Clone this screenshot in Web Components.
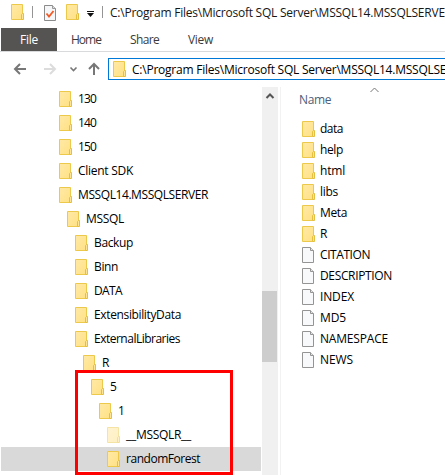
<!DOCTYPE html>
<html lang="en"><head><meta charset="utf-8"><title>Explorer</title>
<style>
html,body{margin:0;width:445px;height:475px;overflow:hidden;background:#fff;color:#000;font:12px/16px "Open Sans","Noto Sans",sans-serif}
</style></head><body>
<explorer-window></explorer-window>
<script>
function define(name, html, init){
  const t=document.createElement('template'); t.innerHTML=html;
  customElements.define(name, class extends HTMLElement{
    connectedCallback(){
      if(this.shadowRoot) return;
      this.attachShadow({mode:'open'}).append(t.content.cloneNode(true));
      if(init) init(this,this.shadowRoot);
    }
  });
}
/* Text tracked to an exact advance width */
define('fit-text', `<style>:host{display:block;white-space:pre;flex:none}span{display:inline-block}</style><span><slot></slot></span>`, (el,root)=>{
  const s=root.querySelector('span'), w=+el.getAttribute('w'), n=el.textContent.length;
  if(w) s.style.letterSpacing=((w-s.getBoundingClientRect().width)/n)+'px';
});
define('folder-icon', `<style>:host{display:block;width:13px;height:16px;flex:none}:host([faded]){opacity:.5}svg{display:block}</style>
<svg width="13" height="16" viewBox="0 0 13 16"><defs><linearGradient id="g" x1="0" y1="0" x2="1" y2="1"><stop stop-color="#ffe9a6"/><stop offset="1" stop-color="#ffe184"/></linearGradient></defs>
<path d="M.5.5h11v15H.5z" fill="url(#g)" stroke="#ecc84b"/><path d="M10.500 15.500v-5l1-1h1v6z" fill="#ffe590" stroke="#e5bf3f"/></svg>`);
define('file-icon', `<style>:host{display:block;width:13px;height:16px;flex:none}svg{display:block}</style>
<svg width="13" height="16" viewBox="0 0 13 16"><path d="M.5.5h8l3 3v12H.5z" fill="#f8f9fa" stroke="#949494"/><path d="M8.500.5v3h3" fill="#e4e4e4" stroke="#949494"/></svg>`);
define('check-icon', `<style>:host{display:block;width:12px;height:16px;flex:none}svg{display:block}</style>
<svg width="12" height="16" viewBox="0 0 12 16"><path d="M.5.5h8l3 3v12H.5z" fill="#f5f6f7" stroke="#8b8b8b"/><path d="M8.500.5v3h3" fill="#ddd" stroke="#999"/><path d="M2.500 8.500l2.500 3 4.500-5.500" fill="none" stroke="#f15a24" stroke-width="1.800"/></svg>`);
define('title-bar', `<style>:host{display:flex;height:28px;box-sizing:border-box;padding:5px 0 0 11px;align-items:flex-start;overflow:hidden;color:#161616}
i{width:1px;height:12px;background:#949494;margin:1px 11px 0 8px;flex:none}i.b{margin:1px 7px 0 8px}folder-icon{margin-top:-1px}folder-icon.b{margin-left:10px}svg{margin:6px 0 0 8px;flex:none}</style>
<folder-icon></folder-icon><i></i><check-icon></check-icon><folder-icon class="b"></folder-icon>
<svg width="7" height="6"><path d="M0 0h7v1H0zM0 2h7L3.500 6z" fill="#111"/></svg><i class="b"></i><fit-text w="342">C:\\Program Files\\Microsoft SQL Server\\MSSQL14.MSSQLSERVER</fit-text>`);
define('ribbon-tabs', `<style>:host{display:flex;height:24px;box-sizing:border-box;border-bottom:1px solid #d9dadb;padding-left:1px;line-height:24px;color:#3b3b3b}
.file{width:56px;height:23px;background:#565453;color:#fff;display:flex;justify-content:center}fit-text+fit-text{margin-left:29px}</style>
<div class="file"><fit-text w="18">File</fit-text></div><fit-text w="30" style="margin-left:14px">Home</fit-text><fit-text w="29">Share</fit-text><fit-text w="25">View</fit-text>`);
define('address-row', `<style>:host{display:flex;height:35px;box-sizing:border-box;padding-top:6px;overflow:hidden}
svg{flex:none}.box{box-sizing:border-box;width:345px;height:22px;border:1px solid #0078d7;border-right:0;padding:2px 0 0 4px;display:flex;gap:6px;overflow:hidden;flex:none}fit-text{margin-top:1px}</style>
<svg width="108" height="22" fill="none" stroke-width="2"><path d="M26 11H15m5-5l-5 5 5 5" stroke="#777"/><path d="M44 11h11m-5-5l5 5-5 5" stroke="#dcdcdc"/><path d="M70.500 9.500l3 3 3-3" stroke="#777" stroke-width="1.600"/><path d="M94 17V6m-5 5l5-5 5 5" stroke="#777"/></svg>
<div class="box"><folder-icon></folder-icon><fit-text w="342">C:\\Program Files\\Microsoft SQL Server\\MSSQL14.MSSQLSERVER</fit-text></div>`);
define('tree-item', `<style>:host{display:flex;height:24px;box-sizing:border-box;align-items:center;gap:6px;margin-left:1px;padding-left:calc(58px + var(--level)*8px)}
:host([selected]){background:#d9d9d9}</style><folder-icon></folder-icon><slot></slot>`, (el,root)=>{
  el.style.setProperty('--level',el.getAttribute('level'));
  if(el.hasAttribute('faded')) root.querySelector('folder-icon').setAttribute('faded','');
});
define('scroll-bar', `<style>:host{display:block;width:16px;background:#f0f0f0;flex:none}svg{display:block}div{width:15px;height:71px;background:#cdcdcd;margin-top:187px}</style>
<svg width="16" height="17"><path d="M4.500 11l3.500-3.500 3.500 3.500" fill="none" stroke="#555" stroke-width="2"/></svg><div></div>`);
define('file-row', `<style>:host{display:flex;height:21px;align-items:center;gap:5px;padding-left:21px}</style><div></div><slot></slot>`, (el,root)=>{
  root.querySelector('div').replaceWith(document.createElement(el.hasAttribute('folder')?'folder-icon':'file-icon'));
});
const tree=[['130',0,18],['140',0,18],['150',0,18],['Client SDK',0,55],['MSSQL14.MSSQLSERVER',0,130],['MSSQL',1,38],['Backup',2,39],['Binn',2,24],['DATA',2,28],['ExtensibilityData',2,87],['ExternalLibraries',2,86],['R',3,7],['5',4,6],['1',5,6],['__MSSQLR__',6,65,'faded'],['randomForest',6,74,'selected']];
define('folder-tree', `<style>:host{display:block;width:261px;flex:none}</style>${tree.map(([n,l,w,a=''])=>`<tree-item level="${l}" ${a}><fit-text w="${w}">${n}</fit-text></tree-item>`).join('')}`);
const files=[['data',23,1],['help',23,1],['html',25,1],['libs',18,1],['Meta',27,1],['R',7,1],['CITATION',50],['DESCRIPTION',72],['INDEX',34],['MD5',26],['NAMESPACE',68],['NEWS',33]];
define('file-list', `<style>:host{display:block;flex:1;margin-left:2px;border-left:1px solid #f2f2f2}
header{height:31px;box-sizing:border-box;padding:5px 0 0 18px;color:#4c607a;display:flex}svg{margin:-5px 0 0 39px}</style>
<header><fit-text w="32">Name</fit-text><svg width="9" height="6"><path d="M.5 5l4-4 4 4" fill="none" stroke="#777"/></svg></header>
${files.map(([n,w,f])=>`<file-row ${f?'folder':''}><fit-text w="${w}">${n}</fit-text></file-row>`).join('')}`);
define('highlight-frame', `<style>:host{position:absolute;box-sizing:border-box;left:75px;top:370px;width:158px;height:105px;border:3px solid #f00}</style>`);
define('explorer-window', `<style>:host{display:block;position:relative;width:445px;height:475px;overflow:hidden;background:#fff}main{display:flex;height:388px}</style>
<title-bar></title-bar><ribbon-tabs></ribbon-tabs><address-row></address-row><main><folder-tree></folder-tree><scroll-bar style="margin-left:1px"></scroll-bar><file-list></file-list></main><highlight-frame></highlight-frame>`);
</script></body></html>
